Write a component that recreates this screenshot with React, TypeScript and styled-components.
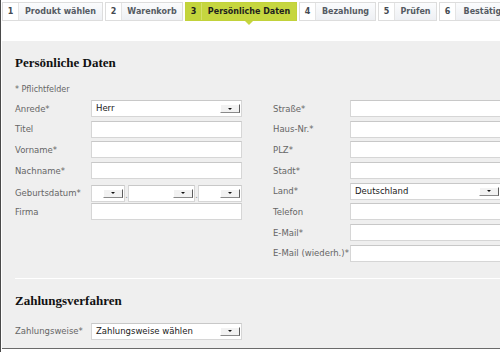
import React from 'react';
import styled, { createGlobalStyle } from 'styled-components';

const GlobalStyle = createGlobalStyle`
  html, body {
    margin: 0;
    padding: 0;
    background: #ffffff;
  }
  body {
    font-family: "DejaVu Sans", Verdana, sans-serif;
  }
`;

const Frame = styled.div`
  width: 500px;
  height: 352px;
  box-sizing: border-box;
  border-left: 1px solid #4a4a4a;
  overflow: hidden;
  background: #ffffff;
`;

const TabBar = styled.div`
  display: flex;
  gap: 2px;
  padding: 2px 0 0 1px;
  white-space: nowrap;
`;

const Tab = styled.div<{ $active?: boolean }>`
  position: relative;
  display: flex;
  flex-shrink: 0;
  height: 17px;
  border: 1px solid ${p => (p.$active ? '#c2d23a' : '#dddddd')};
  font-size: 8px;
  font-weight: bold;
  line-height: 17px;
  color: ${p => (p.$active ? '#1e1e1e' : '#555b63')};
`;

const TabNum = styled.div<{ $active?: boolean }>`
  width: 15px;
  text-align: center;
  background: ${p => (p.$active ? '#c3d43c' : '#ffffff')};
  border-right: 1px solid ${p => (p.$active ? '#d4e06a' : '#e4e4e4')};
  color: ${p => (p.$active ? '#1e1e1e' : '#444a52')};
`;

const TabLabel = styled.div<{ $active?: boolean; $w: number }>`
  width: ${p => p.$w}px;
  overflow: hidden;
  text-align: center;
  background: ${p =>
    p.$active ? '#c6d63f' : 'linear-gradient(#fbfcfd, #eef0f4)'};
  ${p =>
    p.$active &&
    `
    &::after {
      content: '';
      position: absolute;
      left: 59px;
      bottom: -5px;
      border-left: 4px solid transparent;
      border-right: 4px solid transparent;
      border-top: 4px solid #c6d63f;
    }
  `}
`;

const Panel = styled.div`
  margin-top: 20px;
  margin-left: 1px;
  height: 308px;
  box-sizing: border-box;
  background: #efefef;
  border-bottom: 1px solid #6a6a6a;
  padding: 14px 0 0 13px;
`;

const Heading = styled.h2`
  margin: 0;
  font-family: "Liberation Serif", "Times New Roman", serif;
  font-size: 13px;
  font-weight: bold;
  line-height: 16px;
  color: #111111;
`;

const Note = styled.div`
  margin-top: 14px;
  font-size: 8px;
  line-height: 10px;
  color: #666666;
`;

const Columns = styled.div`
  display: flex;
  gap: 31px;
  margin-top: 5px;
`;

const Column = styled.div`
  display: flex;
  flex-direction: column;
  gap: 3.7px;
`;

const Row = styled.div<{ $labelWidth: number }>`
  display: grid;
  grid-template-columns: ${p => p.$labelWidth}px auto;
  align-items: center;
  height: 17px;
`;

const Label = styled.div`
  font-size: 8.5px;
  color: #666666;
  white-space: nowrap;
`;

const Field = styled.div<{ $width: number }>`
  position: relative;
  width: ${p => p.$width}px;
  height: 17px;
  box-sizing: border-box;
  background: #ffffff;
  border: 1px solid #d6d6d6;
  border-top-color: #c8c8c8;
  font-size: 8.5px;
  line-height: 15px;
  padding-left: 4px;
  color: #1a1a1a;
  display: flex;
  align-items: center;
  justify-content: space-between;
`;

const DropButton = styled.div`
  width: 20px;
  height: 9px;
  margin-right: 1px;
  box-sizing: border-box;
  background: #f2f2f2;
  border-top: 1px solid #ffffff;
  border-left: 1px solid #ffffff;
  border-right: 1px solid #5c5c5c;
  border-bottom: 1px solid #8a8a8a;
  display: flex;
  align-items: center;
  justify-content: center;
  &::before {
    content: '';
    border-left: 2px solid transparent;
    border-right: 2px solid transparent;
    border-top: 2px solid #111111;
  }
`;

const DateGroup = styled.div`
  display: flex;
  align-items: center;
`;

const Dot = styled.span`
  width: 3px;
  text-align: center;
  font-size: 8px;
  color: #888888;
  line-height: 17px;
  padding-top: 4px;
`;

const Divider = styled.div`
  margin: 16px 0 0 0;
  height: 1px;
  background: #ffffff;
`;

const SectionHead = styled(Heading)`
  margin-top: 14px;
`;

const PayRow = styled(Row)`
  margin-top: 14px;
`;

const Select = ({ value, width }: { value?: string; width: number }) => (
  <Field $width={width}>
    <span>{value}</span>
    <DropButton />
  </Field>
);

const tabs = [
  { n: '1', label: 'Produkt wählen', w: 83 },
  { n: '2', label: 'Warenkorb', w: 60 },
  { n: '3', label: 'Persönliche Daten', w: 94, active: true },
  { n: '4', label: 'Bezahlung', w: 59 },
  { n: '5', label: 'Prüfen', w: 41 },
  { n: '6', label: 'Bestätigung', w: 70 },
];

const leftRows: { label: string; kind: 'input' | 'select' | 'date'; value?: string }[] = [
  { label: 'Anrede*', kind: 'select', value: 'Herr' },
  { label: 'Titel', kind: 'input' },
  { label: 'Vorname*', kind: 'input' },
  { label: 'Nachname*', kind: 'input' },
  { label: 'Geburtsdatum*', kind: 'date' },
  { label: 'Firma', kind: 'input' },
];

const rightRows: { label: string; kind: 'input' | 'select'; value?: string }[] = [
  { label: 'Straße*', kind: 'input' },
  { label: 'Haus-Nr.*', kind: 'input' },
  { label: 'PLZ*', kind: 'input' },
  { label: 'Stadt*', kind: 'input' },
  { label: 'Land*', kind: 'select', value: 'Deutschland' },
  { label: 'Telefon', kind: 'input' },
  { label: 'E-Mail*', kind: 'input' },
  { label: 'E-Mail (wiederh.)*', kind: 'input' },
];

export default function App() {
  return (
    <>
      <GlobalStyle />
      <Frame>
        <TabBar>
          {tabs.map(t => (
            <Tab key={t.n} $active={t.active}>
              <TabNum $active={t.active}>{t.n}</TabNum>
              <TabLabel $active={t.active} $w={t.w}>{t.label}</TabLabel>
            </Tab>
          ))}
        </TabBar>
        <Panel>
          <Heading>Persönliche Daten</Heading>
          <Note>* Pflichtfelder</Note>
          <Columns>
            <Column>
              {leftRows.map(r => (
                <Row key={r.label} $labelWidth={76}>
                  <Label>{r.label}</Label>
                  {r.kind === 'input' && <Field $width={151} />}
                  {r.kind === 'select' && <Select width={151} value={r.value} />}
                  {r.kind === 'date' && (
                    <DateGroup>
                      <Select width={34} />
                      <Dot>.</Dot>
                      <Select width={67} />
                      <Dot>.</Dot>
                      <Select width={44} />
                    </DateGroup>
                  )}
                </Row>
              ))}
            </Column>
            <Column>
              {rightRows.map(r => (
                <Row key={r.label} $labelWidth={77}>
                  <Label>{r.label}</Label>
                  {r.kind === 'input' ? (
                    <Field $width={151} />
                  ) : (
                    <Select width={151} value={r.value} />
                  )}
                </Row>
              ))}
            </Column>
          </Columns>
          <Divider />
          <SectionHead>Zahlungsverfahren</SectionHead>
          <PayRow $labelWidth={76}>
            <Label>Zahlungsweise*</Label>
            <Select width={151} value="Zahlungsweise wählen" />
          </PayRow>
        </Panel>
      </Frame>
    </>
  );
}
